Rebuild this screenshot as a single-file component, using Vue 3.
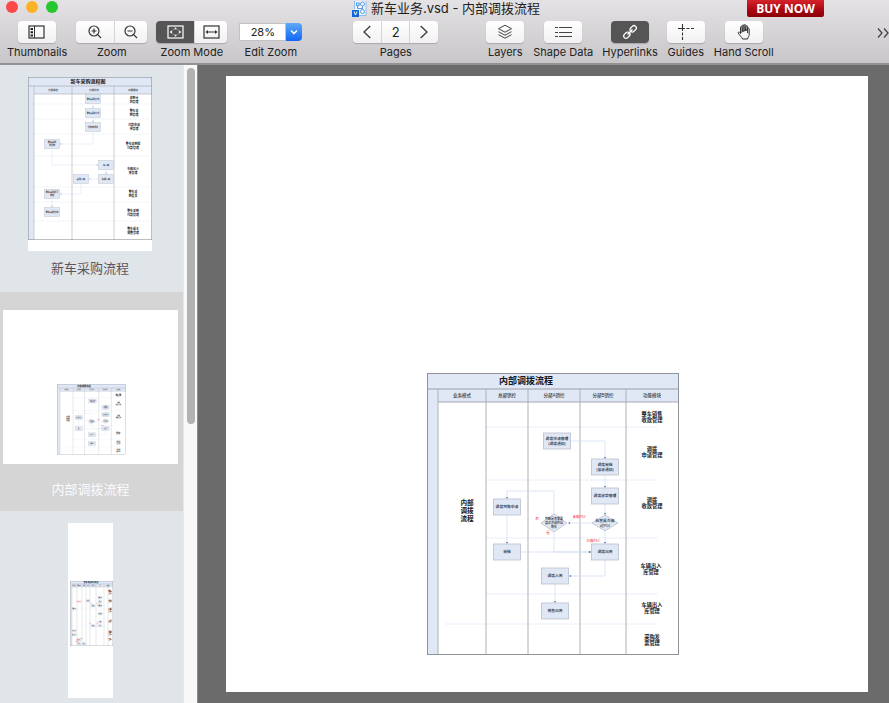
<script setup>
import { h, ref } from 'vue'

const FONT = '"Liberation Sans", "Noto Sans CJK SC", sans-serif'

// Swimlane charts. Box: [centre x, centre y, ...lines]. Text: [x, y, size, ...lines].
const transfer = {
  w: 252, h: 282, titleH: 16, headH: 29, stroke: 1,
  title: ['内部调拨流程', 99, 9],
  cols: [11, 59, 101, 153, 199],
  heads: [['业务模式', 35], ['总部销控', 80], ['分部A销控', 127], ['分部B销控', 176], ['功能模块', 225]],
  headSize: 4.5,
  boxW: 27, boxH: 16, boxSize: 3.8,
  boxes: [
    [130, 68, '调拨申请管理', '(调拨通知)'], [178, 94, '调拨审核', '(接收通知)'],
    [178, 123, '调拨收款管理'], [80, 134, '调拨特殊申请'], [80, 179, '审核'],
    [178, 179, '调拨出库'], [128, 203, '调拨入库'], [128, 238, '销售出库']
  ],
  diamonds: [[127, 150, 13, 9, 3, '判断是否需要', '真正开调外自', '购车'], [178, 150, 13, 8, 3.8, '检查是否做', '过PDI']],
  dashes: [[59, 54], [59, 107], [59, 165], [59, 221], [19, 251]],
  dashEnd: 230,
  arrows: [
    [[144, 68], [178, 68], [178, 86]], [[178, 102], [178, 115]], [[178, 131], [178, 142]],
    [[127, 141], [127, 118], [80, 118], [80, 126]], [[80, 142], [80, 171]], [[94, 179], [164, 179]],
    [[127, 159], [127, 179], [164, 179]], [[165, 150], [141, 150]], [[178, 158], [178, 171]],
    [[178, 187], [178, 203], [142, 203]], [[128, 211], [128, 230]]
  ],
  labels: [
    [225, 41, 5.2, '整车销售', '收款管理'], [225, 76, 5.2, '调拨', '申请管理'], [225, 127, 5.2, '调拨', '收款管理'],
    [224, 193, 5.2, '车辆出入', '库管理'], [225, 232, 5.2, '车辆出入', '库管理'], [225, 264, 5.2, '采购发', '票管理'],
    [40, 130, 6.6, '内部', '调拨', '流程']
  ],
  notes: [[110, 146, '否'], [152, 144, '未做PDI'], [121, 160, '是'], [166, 168, '已做PDI']],
  noteSize: 3.5
}

const purchase = {
  w: 124, h: 163, titleH: 9, headH: 17, stroke: 0.6,
  title: ['新车采购流程图', 60, 5],
  cols: [6, 44, 86],
  heads: [['分部销控', 25], ['分部财务', 66], ['功能模块', 105]],
  headSize: 2.5,
  boxW: 15, boxH: 9, boxSize: 2.1,
  boxes: [
    [65, 22, '整车采购计划'], [65, 36, '整车采购订单'], [65, 50, '付款申请单'],
    [24, 67, '整车采购', '预付款'], [78, 88, '车入库'], [78, 102, '车辆入库'],
    [53, 102, '采购入库'], [24, 117, '整车采购发票', '审核'], [24, 135, '整车采购付款']
  ],
  diamonds: [],
  dashes: [[6, 27], [6, 42], [6, 57], [6, 79], [6, 110], [6, 125], [6, 144]],
  dashEnd: 122,
  arrows: [
    [[65, 27], [65, 31]], [[65, 41], [65, 45]], [[65, 55], [65, 67], [32, 67]],
    [[24, 72], [24, 88], [70, 88]], [[78, 93], [78, 97]], [[70, 102], [61, 102]],
    [[53, 107], [53, 117], [32, 117]], [[24, 122], [24, 130]]
  ],
  labels: [
    [106, 21, 2.9, '采购计', '划管理'], [106, 34, 2.9, '整车采', '购管理'], [106, 48, 2.9, '付款申请', '单管理'],
    [105, 67, 2.9, '整车采购预', '付款管理'], [105, 92, 2.9, '车辆出入', '库管理'], [105, 115, 2.9, '整车采', '购发票'],
    [105, 134, 2.9, '整车采购', '付款管理'], [105, 152, 2.9, '整车成本', '调整管理']
  ],
  notes: [], noteSize: 2
}

const retail = {
  w: 43, h: 65, titleH: 3, headH: 6, stroke: 0.3,
  title: ['整车销售业务流程', 21, 1.8],
  cols: [2, 7, 12, 16, 20, 26, 34, 38],
  heads: [['业务模式', 4], ['销售顾问', 9], ['销售', 14], ['财务', 18], ['分部销控', 23], ['分部', 30], ['功能模块', 38]],
  headSize: 0.9,
  boxW: 4, boxH: 2, boxSize: 0.9,
  boxes: [
    [30, 17, '销售订单'], [30, 21, '审核'], [18, 20, '收款'], [30, 25, '销售管理'], [23, 25, '收款'],
    [4, 28, '销售流程'], [30, 33, '车辆管理'], [30, 41, '开票'], [30, 45, '出库'], [23, 45, '收款'],
    [4, 50, '退车流程'], [4, 54, '换车流程'], [9, 59, '入库'], [9, 63, '出库'], [14, 63, '审核']
  ],
  diamonds: [],
  dashes: [[2, 28], [2, 45]], dashEnd: 38,
  arrows: [[[30, 18], [30, 32]], [[30, 34], [30, 44]], [[28, 25], [25, 25]], [[28, 45], [25, 45]]],
  labels: [
    [40, 9, 1.4, '整车', '销售', '管理'], [40, 19, 1.4, '收款', '管理'], [40, 27, 1.4, '车辆', '销售', '管理'],
    [40, 39, 1.4, '车辆', '出库'], [40, 50, 1.4, '销售', '发票', '管理'], [40, 57, 1.4, '退车', '管理']
  ],
  notes: [[9, 21, '收款通知'], [21, 23, '已收'], [27, 23, '未收'], [20, 43, '已收'], [27, 43, '未收'], [8, 59, '通知'], [12, 58, '退回'], [7, 61, '退款']],
  noteSize: 1.2
}

// Draws a chart at kx/ky of its natural size; glyphs keep their proportions.
function FlowChart({ chart: c, kx = 1, ky = 1 }) {
  const out = []
  const X = (v) => v * kx
  const Y = (v) => v * ky
  const lw = Math.max(c.stroke * kx, 0.3)
  const text = (x, y, size, lines, fill, weight, lead = 1.22) =>
    lines.forEach((s, i) => out.push(h('text', {
      x: X(x), y: Y(y + size * lead * i + size * 0.36), 'font-size': size * ky,
      'text-anchor': 'middle', 'font-weight': weight, fill
    }, s)))
  const line = (x1, y1, x2, y2, stroke, dash) => out.push(h('line', {
    x1: X(x1), y1: Y(y1), x2: X(x2), y2: Y(y2), stroke, 'stroke-width': lw, 'stroke-dasharray': dash
  }))
  out.push(h('rect', { x: 0, y: 0, width: X(c.w), height: Y(c.headH), fill: '#e1e8f5' }))
  out.push(h('rect', { x: 0, y: Y(c.titleH), width: X(c.cols[0]), height: Y(c.h - c.titleH), fill: '#e1e8f5' }))
  c.dashes.forEach(([x, y]) => line(x, y, c.dashEnd, y, '#e3e8f4', kx < 1 ? undefined : '3 1'))
  c.cols.forEach((x) => line(x, c.titleH, x, c.h, '#aeb0b4'))
  line(0, c.titleH, c.w, c.titleH, '#9a9fa9')
  line(c.cols[0], c.headH, c.w, c.headH, '#a4a9b3')
  out.push(h('rect', {
    x: lw / 2, y: lw / 2, width: X(c.w) - lw, height: Y(c.h) - lw, fill: 'none', stroke: '#8f949b', 'stroke-width': lw
  }))
  c.arrows.forEach((pts) => {
    out.push(h('polyline', {
      points: pts.map(([x, y]) => `${X(x)},${Y(y)}`).join(' '), fill: 'none', stroke: '#cfdaf0', 'stroke-width': lw * 0.7
    }))
    const [ex, ey] = pts[pts.length - 1]
    const [px, py] = pts[pts.length - 2]
    const dx = Math.sign(ex - px)
    const dy = Math.sign(ey - py)
    const s = c.boxH * 0.065
    const tip = [[ex, ey], [ex - dx * 2 * s + dy * s, ey - dy * 2 * s + dx * s], [ex - dx * 2 * s - dy * s, ey - dy * 2 * s - dx * s]]
    out.push(h('polygon', { points: tip.map(([x, y]) => `${X(x)},${Y(y)}`).join(' '), fill: '#4a74c0' }))
  })
  c.boxes.forEach(([x, y, ...lines]) => {
    out.push(h('rect', {
      x: X(x - c.boxW / 2), y: Y(y - c.boxH / 2), width: X(c.boxW), height: Y(c.boxH),
      fill: '#e1e8f5', stroke: '#b9bfcc', 'stroke-width': lw * 0.8
    }))
    text(x, y - (lines.length - 1) * c.boxSize * 0.6, c.boxSize, lines, '#222733', 500)
  })
  c.diamonds.forEach(([x, y, rx, ry, size, ...lines]) => {
    const pts = [[x - rx, y], [x, y - ry], [x + rx, y], [x, y + ry]]
    out.push(h('polygon', {
      points: pts.map(([a, b]) => `${X(a)},${Y(b)}`).join(' '), fill: '#e1e8f5', stroke: '#b9bfcc', 'stroke-width': lw * 0.8
    }))
    text(x, y - (lines.length - 1) * size * 0.6, size, lines, '#222733', 500)
  })
  text(c.title[1], c.titleH / 2, c.title[2], [c.title[0]], '#14161c', 700)
  c.heads.forEach(([s, x]) => text(x, (c.titleH + c.headH) / 2, c.headSize, [s], '#30343e', 500))
  c.labels.forEach(([x, y, size, ...lines]) => text(x, y, size, lines, '#15171c', 700))
  c.notes.forEach(([x, y, s]) => text(x, y, c.noteSize, [s], '#f5333f', 400))
  return h('svg', { width: X(c.w), height: Y(c.h), 'font-family': FONT, style: 'display:block' }, out)
}
FlowChart.props = ['chart', 'kx', 'ky']

const current = ref(2)
const zoom = ref('28%')
const pages = [
  { id: 1, name: '新车采购流程', chart: purchase, kind: 'tall' },
  { id: 2, name: '内部调拨流程', chart: transfer, kind: 'wide', kx: 0.273, ky: 0.25 },
  { id: 3, name: '整车销售流程', chart: retail, kind: 'narrow' }
]
function step(n) {
  current.value = Math.min(pages.length, Math.max(1, current.value + n))
}
</script>

<template>
  <div class="window">
    <header class="chrome">
      <div class="titlebar">
        <div class="lights">
          <button class="light close" aria-label="Close"></button>
          <button class="light minimize" aria-label="Minimize"></button>
          <button class="light expand" aria-label="Full screen"></button>
        </div>
        <h1 class="title">
          <svg width="15" height="16" viewBox="0 0 15 16" fill="none" stroke="#5b9be6">
            <path d="M3 0H14V14.500H3z" fill="#edf4fc" stroke="none" />
            <path d="M2.500 0V8M7 14.500H14V0" stroke="#8fbcf0" />
            <circle cx="10.500" cy="3" r="2" /><circle cx="10.500" cy="10.500" r="2" /><rect x="4.500" y="2" width="2.500" height="2.500" />
            <path d="M7 3h1.500M10.500 5v3.500M5.500 5v2.500h5" />
            <rect x="0" y="9" width="7" height="7" fill="#1268d8" stroke="none" />
            <path d="M2 10.500l1.500 3.500 1.500-3.500" stroke="#fff" />
          </svg>
          <span>新车业务.vsd - 内部调拨流程</span>
        </h1>
        <button class="buy">BUY NOW</button>
      </div>

      <nav class="tools">
        <div class="tool">
          <div class="segments">
            <button aria-labelledby="l-thumbs">
              <svg width="18" height="14" viewBox="0 0 18 14" fill="none" stroke="#333">
                <rect x="1" y="1" width="15" height="12" stroke-width="1.200" /><path d="M6.500 1v12" />
                <path d="M2.500 3h2.500v2h-2.500zM2.500 6.200h2.500v2h-2.500zM2.500 9.400h2.500v2h-2.500z" fill="#222" stroke="none" />
              </svg>
            </button>
          </div>
          <span id="l-thumbs">Thumbnails</span>
        </div>
        <div class="tool">
          <div class="segments">
            <button aria-label="Zoom in">
              <svg width="14" height="14" viewBox="0 0 14 14" fill="none" stroke="#333" stroke-width="1.200">
                <circle cx="6" cy="6" r="5" /><path d="M9.700 9.700l3.300 3.300M3.500 6h5M6 3.500v5" />
              </svg>
            </button>
            <button aria-label="Zoom out">
              <svg width="14" height="14" viewBox="0 0 14 14" fill="none" stroke="#333" stroke-width="1.200">
                <circle cx="6" cy="6" r="5" /><path d="M9.700 9.700l3.300 3.300M3.500 6h5" />
              </svg>
            </button>
          </div>
          <span>Zoom</span>
        </div>
        <div class="tool">
          <div class="segments">
            <button class="on" aria-label="Fit page">
              <svg width="17" height="14" viewBox="0 0 17 14" fill="none" stroke="#fff">
                <rect x="1" y="1" width="15" height="12" stroke-width="1.200" />
                <path d="M8.500 2.200l1.500 2h-3zM8.500 11.800l1.500-2h-3zM2.500 7l2.500-1.600v3.200zM14.500 7l-2.500-1.600v3.200z" fill="#fff" stroke="none" />
                <path d="M5.500 5.500l1-1M11.500 5.500l-1-1M5.500 8.500l1 1M11.500 8.500l-1 1" stroke-width=".8" />
              </svg>
            </button>
            <button aria-label="Fit width">
              <svg width="17" height="14" viewBox="0 0 17 14" fill="none" stroke="#333">
                <rect x="1" y="1" width="15" height="12" stroke-width="1.200" />
                <path d="M3.500 7h10" /><path d="M2.500 7l2.500-2v4zM14.500 7l-2.500-2v4z" fill="#333" stroke="none" />
              </svg>
            </button>
          </div>
          <span>Zoom Mode</span>
        </div>
        <div class="tool combo-tool">
          <div class="combo">
            <input id="zoom-value" v-model="zoom" type="text" />
            <button aria-label="Zoom presets">
              <svg width="8" height="6" viewBox="0 0 8 6" fill="none" stroke="#fff" stroke-width="1.500"><path d="M1 1.500l3 3 3-3" /></svg>
            </button>
          </div>
          <label for="zoom-value">Edit Zoom</label>
        </div>
        <div class="tool pages-tool">
          <div class="segments pager">
            <button aria-label="Previous page" @click="step(-1)">
              <svg width="8" height="14" viewBox="0 0 8 14" fill="none" stroke="#444" stroke-width="1.500"><path d="M7.300 1L1 7l6.300 6" /></svg>
            </button>
            <output class="page-no">{{ current }}</output>
            <button aria-label="Next page" @click="step(1)">
              <svg width="8" height="14" viewBox="0 0 8 14" fill="none" stroke="#444" stroke-width="1.500"><path d="M.7 1L7 7l-6.300 6" /></svg>
            </button>
          </div>
          <span>Pages</span>
        </div>
        <div class="tool">
          <div class="segments">
            <button aria-labelledby="l-layers">
              <svg width="16" height="16" viewBox="0 0 16 16" fill="none" stroke="#444">
                <path d="M8 1.200L14.500 4.700 8 8.200 1.500 4.700z" /><path d="M1.500 7.700L8 11.200l6.500-3.500M1.500 10.700L8 14.200l6.500-3.500" />
              </svg>
            </button>
          </div>
          <span id="l-layers">Layers</span>
        </div>
        <div class="tool">
          <div class="segments">
            <button aria-labelledby="l-data">
              <svg width="17" height="12" viewBox="0 0 17 12" fill="none" stroke="#444" stroke-width="1.200">
                <path d="M0 1.500h3M4 1.500h13M0 6.500h3M4 6.500h13M0 10.500h3M4 10.500h13" />
              </svg>
            </button>
          </div>
          <span id="l-data">Shape Data</span>
        </div>
        <div class="tool">
          <div class="segments">
            <button class="on" aria-labelledby="l-links">
              <svg width="16" height="16" viewBox="0 0 16 16" fill="none" stroke="#fff" stroke-width="1.300">
                <g transform="rotate(-45 8 8)">
                  <rect x="0" y="5.700" width="7" height="4.600" rx="2.300" /><rect x="9" y="5.700" width="7" height="4.600" rx="2.300" /><path d="M4.500 8h7" />
                </g>
              </svg>
            </button>
          </div>
          <span id="l-links">Hyperlinks</span>
        </div>
        <div class="tool">
          <div class="segments">
            <button aria-labelledby="l-guides">
              <svg width="16" height="16" viewBox="0 0 16 16" fill="none" stroke="#333">
                <path d="M0 4.500h7M8.500 4.500h3M13 4.500h3M4.500 0v7M4.500 8.500v3M4.500 13v3" stroke-width="1.100" />
              </svg>
            </button>
          </div>
          <span id="l-guides">Guides</span>
        </div>
        <div class="tool">
          <div class="segments">
            <button aria-labelledby="l-hand">
              <svg width="16" height="16" viewBox="0 0 16 16" fill="none" stroke="#333" stroke-linecap="round" stroke-linejoin="round">
                <path d="M4.500 9.500V3.300c0-1.200 1.700-1.200 1.700 0V7V1.800c0-1.200 1.800-1.200 1.800 0V7V1.500c0-1.200 1.800-1.200 1.800 0V7V2.600c0-1.200 1.800-1.200 1.800 0v6.200M11.600 5c0-1.200 1.600-1.200 1.600 0v5.500c0 1.500-1.200 2.500-1.700 4.500H6.600C6 13.300 3.500 11.500 2.300 9.200c-.5-1.200.9-1.700 1.500-.8z" />
              </svg>
            </button>
          </div>
          <span id="l-hand">Hand Scroll</span>
        </div>
        <button class="more" aria-label="More tools">
          <svg width="12" height="12" viewBox="0 0 12 12" fill="none" stroke="#444" stroke-width="1.300"><path d="M1 1.500L5 6l-4 4.500M7 1.500L11 6l-4 4.500" /></svg>
        </button>
      </nav>
    </header>

    <div class="body">
      <aside class="sidebar">
        <div class="thumbs">
          <button
            v-for="p in pages" :key="p.id"
            class="thumb" :class="[p.kind, { selected: p.id === 2 }]"
            @click="current = p.id"
          >
            <span class="sheet"><FlowChart :chart="p.chart" :kx="p.kx" :ky="p.ky" /></span>
            <span class="name">{{ p.name }}</span>
          </button>
        </div>
        <div class="track"><div class="knob"></div></div>
      </aside>
      <main class="canvas">
        <div class="page"><FlowChart :chart="transfer" /></div>
      </main>
    </div>
  </div>
</template>

<style>
body { margin: 0; }
</style>

<style scoped>
.window {
  display: flex;
  flex-direction: column;
  height: 100vh;
  overflow: hidden;
  font-family: Inter, "Noto Sans CJK SC", sans-serif;
  color: #222;
}
button {
  margin: 0;
  padding: 0;
  border: 0;
  font: inherit;
  color: inherit;
  background: none;
}
.chrome {
  box-sizing: border-box;
  height: 65px;
  flex: none;
  background: linear-gradient(#e4e2e4, #c8c6c9);
  border-bottom: 2px solid #929193;
}
.titlebar {
  display: grid;
  grid-template-columns: 1fr auto 1fr;
  height: 17px;
}
.lights {
  display: flex;
  gap: 8px;
  padding: 1px 6px;
}
.light {
  width: 12px;
  height: 12px;
  border-radius: 50%;
}
.close { background: #fc4848; }
.minimize { background: #fdb225; }
.expand { background: #27c732; }
.title {
  display: flex;
  align-items: center;
  gap: 4px;
  margin: 0;
  padding-left: 3px;
  font-size: 13px;
  font-weight: 400;
  line-height: 16px;
  white-space: nowrap;
}
.title span { margin-top: -2px; }
.buy {
  justify-self: end;
  width: 77px;
  height: 17px;
  margin-right: 65px;
  border-radius: 0 0 2px 2px;
  background: linear-gradient(#d5232b, #a80710 60%, #8c0008);
  font: 700 12px/16px "Open Sans", sans-serif;
  color: #fff;
}
.tools {
  display: flex;
  gap: 9px;
  padding: 4px 0 0 7px;
}
.tool {
  display: flex;
  flex-direction: column;
  align-items: center;
  gap: 2px;
  font-size: 11px;
  line-height: 14px;
  white-space: nowrap;
}
.segments {
  display: flex;
  overflow: hidden;
  height: 22px;
  border-radius: 4px;
  background: linear-gradient(#fff, #f2f1f2);
  box-shadow: 0 1px 1px #a9a7aa;
}
.segments button,
.page-no {
  display: flex;
  align-items: center;
  justify-content: center;
  width: 38px;
}
.segments button + button {
  width: 33px;
  border-left: 1px solid #d4d3d5;
}
.segments .on { background: #555; }
.segments.pager button { width: 28px; }
.page-no {
  width: 27px;
  border: solid #d4d3d5;
  border-width: 0 1px;
  font-size: 13px;
}
.combo-tool { margin-left: 3px; }
.combo {
  display: flex;
  align-items: center;
  height: 22px;
}
.combo input {
  box-sizing: border-box;
  width: 47px;
  height: 18px;
  padding: 0;
  border: 1px solid #c3c1c4;
  background: #fff;
  font: 11px/16px Inter, sans-serif;
  color: #222;
  text-align: center;
}
.combo button {
  display: flex;
  align-items: center;
  justify-content: center;
  width: 16px;
  height: 18px;
  border-radius: 0 4px 4px 0;
  background: linear-gradient(#5fa9f8, #1166f5);
}
.pages-tool { margin: 0 39px 0 42px; }
.more {
  height: 24px;
  margin-left: auto;
}
.body {
  display: flex;
  flex: 1;
  min-height: 0;
}
.sidebar {
  display: flex;
  width: 197px;
  flex: none;
  border-right: 1px solid #8b8b8b;
}
.thumbs {
  flex: 1;
  overflow: hidden;
  background: #e0e5e9;
}
.thumb {
  display: flex;
  flex-direction: column;
  align-items: center;
  width: 100%;
  padding: 12px 6px 12px 3px;
}
.thumb.selected {
  padding: 18px 5px 10px 3px;
  background: #d5d5d5;
}
.sheet {
  box-sizing: border-box;
  flex: none;
  background: #fff;
}
.tall .sheet {
  width: 124px;
  height: 174px;
}
.wide .sheet {
  width: 175px;
  height: 154px;
  padding: 74px 0 0 54px;
}
.narrow .sheet {
  width: 45px;
  height: 175px;
  padding: 58px 0 0 2px;
}
.name {
  margin-top: 5px;
  font-size: 13px;
  line-height: 24px;
  color: #5c5560;
}
.selected .name {
  margin-top: 13px;
  color: #fafafa;
}
.narrow .name { margin-top: 13px; }
.track {
  box-sizing: border-box;
  width: 14px;
  padding: 3px 2px 0 3px;
  background: #f8f8f8;
  border-left: 1px solid #e8e8e8;
}
.knob {
  width: 8px;
  height: 56%;
  border-radius: 4px;
  background: #b2b2b2;
}
.canvas {
  flex: 1;
  min-width: 0;
  box-sizing: border-box;
  padding: 11px 21px 11px 28px;
  background: #6b6b6b;
}
.page {
  box-sizing: border-box;
  height: 100%;
  padding: 297px 0 0 201px;
  background: #fff;
}
</style>
